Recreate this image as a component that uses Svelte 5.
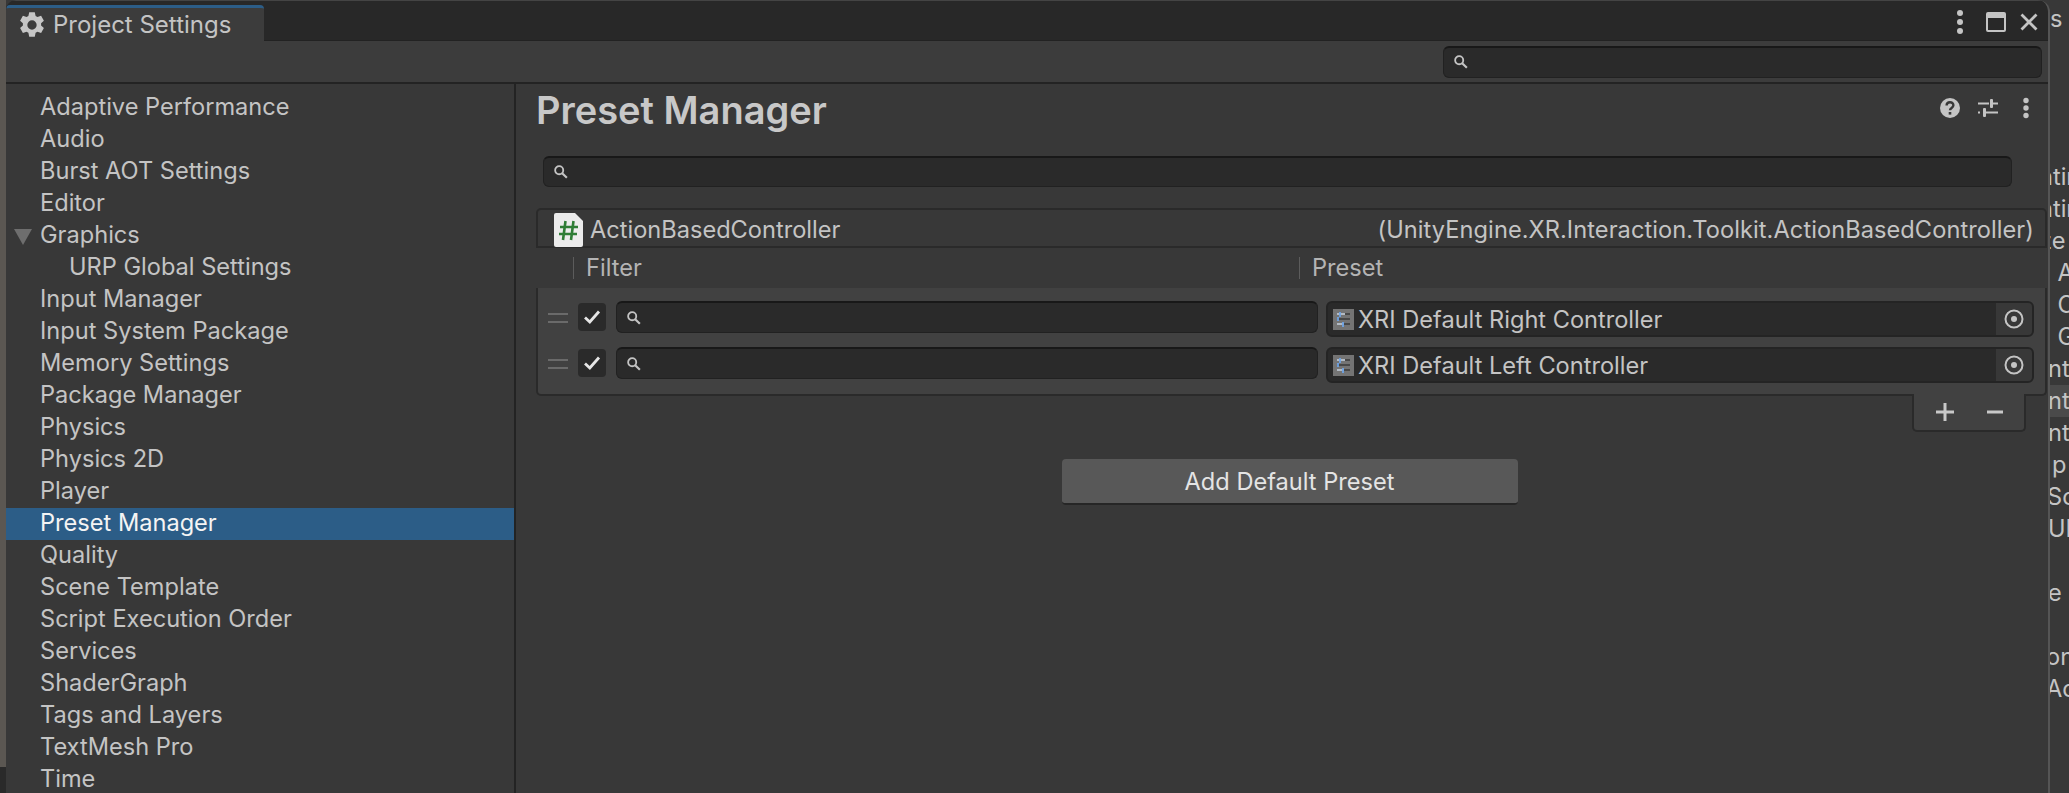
<script>
  const sections = [
    "Adaptive Performance", "Audio", "Burst AOT Settings", "Editor", "Graphics", "URP Global Settings",
    "Input Manager", "Input System Package", "Memory Settings", "Package Manager", "Physics", "Physics 2D",
    "Player", "Preset Manager", "Quality", "Scene Template", "Script Execution Order", "Services",
    "ShaderGraph", "Tags and Layers", "TextMesh Pro", "Time"
  ];
  const presets = ["XRI Default Right Controller", "XRI Default Left Controller"];
  // clipped text of the window behind; shift = how far the word starts left of the strip
  const behind = [
    { t: "nting", shift: 11 }, { t: "nting", shift: 11 }, { t: "ze", shift: 11 }, { t: ": A", shift: 6 },
    { t: ": C", shift: 6 }, { t: ": G", shift: 6 }, { t: "nt", shift: 2 }, { t: "nt", shift: 2, on: true },
    { t: "nt", shift: 2 }, { t: "p", shift: -2 }, { t: "Sc", shift: 3 }, { t: "UI", shift: 2 },
    { t: "", shift: 0 }, { t: "e", shift: 2 }, { t: "", shift: 0 }, { t: "on", shift: 4 }, { t: "Ac", shift: 4 }
  ];
</script>

{#snippet searchIcon()}
  <svg class="search-icon" width="16" height="16" viewBox="0 0 15 15">
    <circle cx="5.8" cy="5.8" r="3.8" fill="none" stroke="#c4c4c4" stroke-width="1.7" />
    <path d="M8.6 8.6 13 13" stroke="#c4c4c4" stroke-width="2" />
  </svg>
{/snippet}

<div class="page">
  <div class="desktop"><div class="desktop-foot"></div></div>

  <div class="window">
    <div class="titlebar">
      <div class="tab">
        <svg width="28" height="28" viewBox="0 0 24 24">
          <path fill="#c6c6c6" fill-rule="evenodd" d="M9.6 1h4.8l.7 3.2 1.6.9 3.1-1 2.4 4.2-2.4 2.2v1.9l2.4 2.2-2.4 4.2-3.1-1-1.6.9-.7 3.3H9.6l-.7-3.3-1.6-.9-3.1 1-2.4-4.2 2.4-2.2v-1.9L1.8 8.3l2.4-4.2 3.1 1 1.6-.9zM12 8a4 4 0 1 0 0 8 4 4 0 0 0 0-8z" />
        </svg>
        <span>Project Settings</span>
      </div>
      <div class="window-btns">
        <svg class="menu-dots" width="8" height="26" viewBox="0 0 8 26">
          <circle cx="4" cy="4" r="3" fill="#c4c4c4" /><circle cx="4" cy="13" r="3" fill="#c4c4c4" /><circle cx="4" cy="22" r="3" fill="#c4c4c4" />
        </svg>
        <svg width="20" height="20" viewBox="0 0 20 20">
          <rect x="1" y="1" width="18" height="18" rx="1" fill="none" stroke="#c4c4c4" stroke-width="2" />
          <rect x="1" y="1" width="18" height="5" fill="#c4c4c4" />
        </svg>
        <svg width="18" height="18" viewBox="0 0 18 18">
          <path d="M1.5 1.5 16.5 16.5M16.5 1.5 1.5 16.5" stroke="#c4c4c4" stroke-width="2.8" />
        </svg>
      </div>
    </div>

    <div class="toolbar">
      <div class="search top-search">{@render searchIcon()}</div>
    </div>

    <div class="body">
      <nav class="sidebar">
        {#each sections as name}
          <div class="row" class:selected={name === "Preset Manager"} class:child={name === "URP Global Settings"}>
            {#if name === "Graphics"}<i class="caret"></i>{/if}
            {name}
          </div>
        {/each}
      </nav>

      <main class="content">
        <header class="heading">
          <h1>Preset Manager</h1>
          <div class="heading-icons">
            <svg width="22" height="22" viewBox="0 0 22 22">
              <circle cx="11" cy="11" r="10" fill="#c4c4c4" />
              <path d="M7.6 8.6c0-4.4 6.8-4.4 6.8-.3 0 2.6-3.4 2.6-3.4 5" fill="none" stroke="#383838" stroke-width="2.4" />
              <rect x="9.7" y="15" width="2.6" height="2.6" fill="#383838" />
            </svg>
            <svg width="20" height="20" viewBox="0 0 20 20">
              <path d="M0 5.5h11M15 5.5h5M0 14.5h2M8 14.5h12" stroke="#c4c4c4" stroke-width="2" />
              <rect x="12" y="1" width="3" height="9" rx="1" fill="#c4c4c4" />
              <rect x="5" y="10" width="3" height="9" rx="1" fill="#c4c4c4" />
            </svg>
            <svg class="menu-dots" width="8" height="22" viewBox="0 0 8 22">
              <circle cx="4" cy="3.5" r="2.7" fill="#c4c4c4" /><circle cx="4" cy="11" r="2.7" fill="#c4c4c4" /><circle cx="4" cy="18.5" r="2.7" fill="#c4c4c4" />
            </svg>
          </div>
        </header>

        <div class="search main-search">{@render searchIcon()}</div>

        <section class="list">
          <div class="list-title">
            <svg class="script" width="29" height="34" viewBox="0 0 29 34">
              <path d="M2 0h19l8 8v24a2 2 0 0 1-2 2H2a2 2 0 0 1-2-2V2a2 2 0 0 1 2-2z" fill="#ececec" />
              <path d="M11.5 8 9 27M19.5 8 17 27M6 14h18M5 21h18" stroke="#2f7d36" stroke-width="2.6" fill="none" />
            </svg>
            <span class="name">ActionBasedController</span>
            <span class="type">(UnityEngine.XR.Interaction.Toolkit.ActionBasedController)</span>
          </div>

          <div class="columns">
            <div class="col filter-col">Filter</div>
            <div class="col">Preset</div>
          </div>

          <div class="list-body">
            {#each presets as preset}
              <div class="entry">
                <div class="handle"></div>
                <div class="check">
                  <svg width="18" height="16" viewBox="0 0 18 16">
                    <path d="M2 8.5 6.8 13 16 2.5" fill="none" stroke="#e6e6e6" stroke-width="2.8" />
                  </svg>
                </div>
                <div class="search entry-search">{@render searchIcon()}</div>
                <div class="object">
                  <svg class="preset-icon" width="21" height="21" viewBox="0 0 21 21">
                    <rect width="21" height="21" fill="#747474" />
                    <path d="M4 5h13M4 10h13M4 15h13" stroke="#3a3a3a" stroke-width="1.5" />
                    <path d="M4 5h8M4 15h7" stroke="#d5dfec" stroke-width="1.5" />
                    <path d="M7 3v5M5 8v4M10 13v5" stroke="#6ea4e6" stroke-width="1.8" />
                  </svg>
                  <span>{preset}</span>
                  <div class="picker">
                    <svg width="20" height="20" viewBox="0 0 20 20">
                      <circle cx="10" cy="10" r="8.5" fill="none" stroke="#c4c4c4" stroke-width="2" />
                      <circle cx="10" cy="10" r="3" fill="#c4c4c4" />
                    </svg>
                  </div>
                </div>
              </div>
            {/each}
          </div>

          <div class="footer">
            <svg width="20" height="20" viewBox="0 0 20 20">
              <path d="M10 1v18M1 10h18" stroke="#c8c8c8" stroke-width="3" />
            </svg>
            <svg width="16" height="20" viewBox="0 0 16 20">
              <path d="M0 10h16" stroke="#c8c8c8" stroke-width="3" />
            </svg>
          </div>
        </section>

        <div class="actions">
          <button>Add Default Preset</button>
        </div>
      </main>
    </div>
  </div>

  <div class="behind">
    <div class="behind-top">s</div>
    {#each behind as b}
      <div class="behind-row" class:on={b.on}>
        <span style="margin-left: {-b.shift}px">{b.t}</span>
      </div>
    {/each}
  </div>
</div>

<style>
  :global(body) {
    margin: 0;
    background: #383838;
  }

  .page {
    display: flex;
    width: 2069px;
    height: 793px;
    overflow: hidden;
    font-family: Inter, "Liberation Sans", sans-serif;
    font-size: 23.6px;
    color: #c4c4c4;
  }

  .desktop {
    width: 6px;
    flex: none;
    background: #5b5752;
    display: flex;
    flex-direction: column;
    justify-content: flex-end;
  }

  .desktop-foot {
    height: 26px;
    background: #2a2a2a;
  }

  .window {
    width: 2044px;
    flex: none;
    display: flex;
    flex-direction: column;
    background: #383838;
    border-right: 2px solid #555;
    box-sizing: border-box;
    border-radius: 10px 12px 0 0;
    overflow: hidden;
  }

  .titlebar {
    height: 41px;
    flex: none;
    box-sizing: border-box;
    padding-top: 4px;
    background: #282828;
    border-top: 1px solid #444;
    border-bottom: 1px solid #222;
    display: flex;
    justify-content: space-between;
  }

  .tab {
    width: 258px;
    box-sizing: border-box;
    margin-bottom: -1px;
    padding-left: 12px;
    display: flex;
    align-items: center;
    gap: 7px;
    background: #3c3c3c;
    border-top: 3px solid #2c5d87;
    border-radius: 4px 4px 0 0;
    font-size: 24px;
  }

  .tab span {
    margin-top: -1px;
  }

  .window-btns {
    display: flex;
    align-items: center;
    gap: 14px;
    padding-right: 10px;
    margin-top: -2px;
  }

  .window-btns .menu-dots {
    margin-right: 8px;
  }

  .toolbar {
    height: 43px;
    flex: none;
    box-sizing: border-box;
    background: #3c3c3c;
    border-bottom: 2px solid #232323;
    display: flex;
    justify-content: flex-end;
    align-items: center;
    padding-right: 6px;
  }

  .search {
    display: flex;
    align-items: center;
    box-sizing: border-box;
    background: #2a2a2a;
    border: 1px solid #212121;
    border-top: 2px solid #181818;
    border-radius: 6px;
    padding-left: 9px;
  }

  .top-search {
    width: 599px;
    height: 32px;
  }

  .search-icon {
    flex: none;
  }

  .body {
    flex: 1;
    min-height: 0;
    display: flex;
  }

  .sidebar {
    width: 508px;
    flex: none;
    padding-top: 8px;
  }

  .row {
    position: relative;
    height: 32px;
    line-height: 30px;
    padding-left: 34px;
    white-space: nowrap;
  }

  .row.child {
    padding-left: 63px;
  }

  .row.selected {
    background: #2c5d87;
    color: #f4f4f4;
  }

  .caret {
    position: absolute;
    left: 8px;
    top: 9px;
    border-left: 9px solid transparent;
    border-right: 9px solid transparent;
    border-top: 16px solid #6e6e6e;
  }

  .content {
    flex: 1;
    min-width: 0;
    border-left: 2px solid #232323;
    padding: 0 0 0 20px;
  }

  .heading {
    height: 52px;
    display: flex;
    align-items: center;
    justify-content: space-between;
    padding-right: 18px;
  }

  h1 {
    margin: 0;
    font-size: 38px;
    font-weight: 600;
    color: #c8c8c8;
  }

  .heading-icons {
    display: flex;
    align-items: center;
    gap: 17px;
    margin-top: -4px;
  }

  .heading-icons .menu-dots {
    margin-left: 7px;
  }

  .main-search {
    width: 1469px;
    height: 31px;
    margin: 20px 0 21px 7px;
  }

  .list {
    width: 1511px;
  }

  .list-title {
    height: 40px;
    box-sizing: border-box;
    border: 2px solid #2a2a2a;
    border-radius: 5px 5px 0 0;
    display: flex;
    align-items: center;
    padding: 0 11px 0 16px;
    position: relative;
    white-space: nowrap;
  }

  .script {
    margin: 4px 7px 0 0;
    flex: none;
  }

  .name {
    flex: 1;
    margin-top: 2px;
  }

  .type {
    margin-top: 2px;
    letter-spacing: 0.07px;
  }

  .columns {
    height: 40px;
    display: grid;
    grid-template-columns: 726px 1fr;
    padding-left: 37px;
    align-items: center;
    color: #b4b4b4;
  }

  .col {
    border-left: 1px solid #5c5c5c;
    height: 22px;
    line-height: 22px;
    padding-left: 12px;
  }

  .list-body {
    height: 108px;
    box-sizing: border-box;
    padding-top: 13px;
    background: #414141;
    border: 2px solid #2a2a2a;
    border-top: none;
    border-radius: 0 0 5px 5px;
  }

  .entry {
    height: 46px;
    display: flex;
    align-items: flex-start;
    padding-left: 10px;
  }

  .handle {
    width: 20px;
    height: 6px;
    margin-top: 12px;
    border-top: 2px solid #6a6a6a;
    border-bottom: 2px solid #6a6a6a;
    flex: none;
  }

  .check {
    width: 28px;
    height: 28px;
    margin: 2px 10px 0 10px;
    flex: none;
    background: #2a2a2a;
    border-radius: 4px;
    display: flex;
    align-items: center;
    justify-content: center;
  }

  .entry-search {
    width: 702px;
    height: 32px;
    flex: none;
  }

  .object {
    width: 708px;
    height: 36px;
    margin-left: 8px;
    flex: none;
    box-sizing: border-box;
    background: #2a2a2a;
    border: 2px solid #242424;
    border-radius: 6px;
    display: flex;
    align-items: center;
    padding-left: 5px;
    overflow: hidden;
  }

  .preset-icon {
    flex: none;
    margin-right: 4px;
  }

  .object span {
    flex: 1;
    margin-top: 1px;
  }

  .picker {
    width: 36px;
    align-self: stretch;
    background: #383838;
    display: flex;
    align-items: center;
    justify-content: center;
  }

  .footer {
    width: 114px;
    height: 38px;
    box-sizing: border-box;
    margin: -2px 0 0 1376px;
    background: #414141;
    border: 2px solid #2a2a2a;
    border-top: none;
    border-radius: 0 0 5px 5px;
    display: flex;
    align-items: center;
    justify-content: center;
    gap: 32px;
    position: relative;
  }

  .actions {
    width: 1507px;
    display: flex;
    justify-content: center;
    margin-top: 27px;
  }

  button {
    width: 456px;
    height: 46px;
    padding: 0;
    border: none;
    border-bottom: 2px solid #262626;
    border-radius: 4px;
    background: #585858;
    color: #e4e4e4;
    font: inherit;
  }

  .behind {
    flex: 1;
    min-width: 0;
    overflow: hidden;
    white-space: nowrap;
    background: #383838;
  }

  .behind-top {
    height: 161px;
    line-height: 37px;
  }

  .behind-row {
    height: 32px;
    line-height: 32px;
  }

  .behind-row.on {
    background: #4a4a4a;
  }

  .behind-row span {
    display: inline-block;
  }
</style>
